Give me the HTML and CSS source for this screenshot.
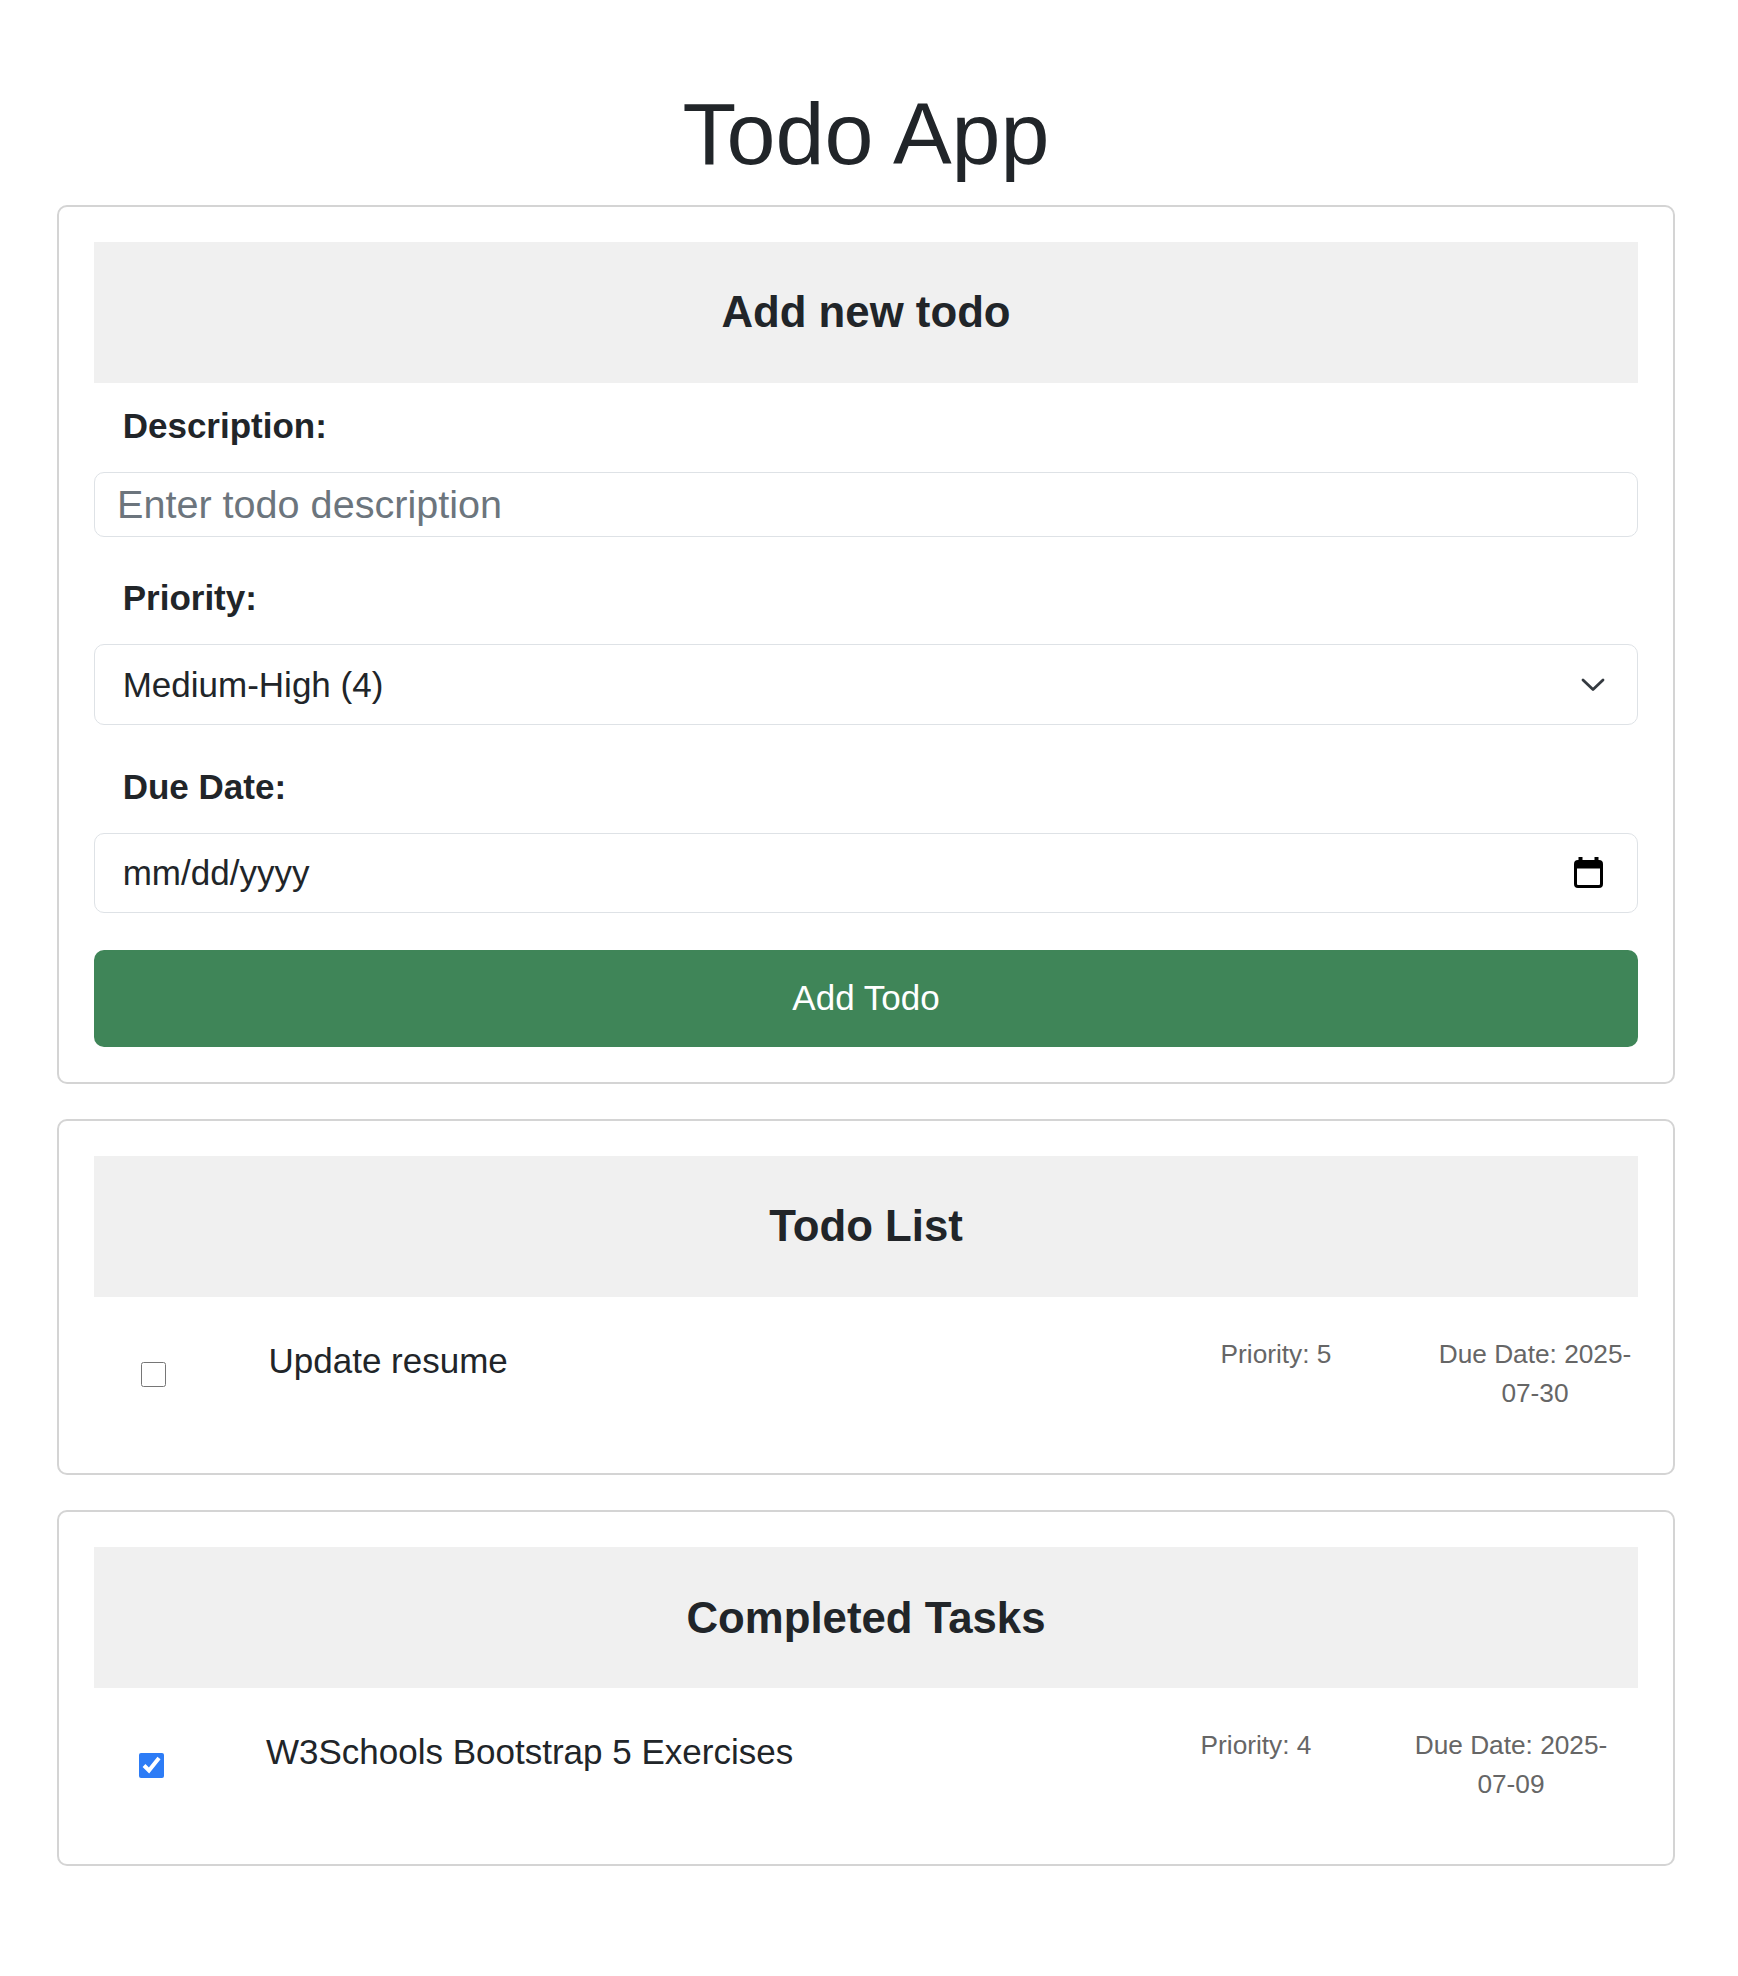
FILE: index.html
```html
<!DOCTYPE html>
<html lang="en">
<head>
<meta charset="utf-8">
<title>Todo App</title>
<link rel="stylesheet" href="styles.css">
</head>
<body>
<main class="app">
  <h1 class="app-title">Todo App</h1>

  <section class="card">
    <h2 class="card-header">Add new todo</h2>
    <form class="todo-form">
      <div class="form-group">
        <label class="form-label" for="desc">Description:</label>
        <input class="field field--text" id="desc" type="text" placeholder="Enter todo description">
      </div>
      <div class="form-group">
        <label class="form-label" for="prio">Priority:</label>
        <div class="field-wrap">
          <select class="field field--select" id="prio">
            <option>Medium-High (4)</option>
          </select>
          <svg class="select-chevron" width="24" height="14" viewBox="0 0 24 14" aria-hidden="true">
            <polyline points="2,2 12,11.5 22,2" fill="none" stroke="#343a40" stroke-width="2.8" stroke-linecap="round" stroke-linejoin="round"/>
          </svg>
        </div>
      </div>
      <div class="form-group">
        <label class="form-label" for="due">Due Date:</label>
        <div class="field-wrap">
          <input class="field field--date" id="due" type="text" placeholder="mm/dd/yyyy">
          <svg class="date-icon" width="29" height="31" viewBox="0 0 29 31" aria-hidden="true">
            <rect x="4.5" y="0" width="4" height="7" fill="#000"/>
            <rect x="20.5" y="0" width="4" height="7" fill="#000"/>
            <rect x="1.5" y="4.5" width="26" height="25" rx="2.5" fill="none" stroke="#000" stroke-width="3"/>
            <rect x="1.5" y="4.5" width="26" height="7" fill="#000"/>
          </svg>
        </div>
      </div>
      <button class="btn-add" type="button">Add Todo</button>
    </form>
  </section>

  <section class="card">
    <h2 class="card-header">Todo List</h2>
    <div class="todo-row todo-row--open">
      <input class="todo-check todo-check--open" type="checkbox">
      <div class="todo-text">Update resume</div>
      <div class="todo-meta">Priority: 5</div>
      <div class="todo-meta todo-due">Due Date: 2025-<wbr>07-30</div>
    </div>
  </section>

  <section class="card">
    <h2 class="card-header">Completed Tasks</h2>
    <div class="todo-row todo-row--done">
      <input class="todo-check todo-check--done" type="checkbox" checked>
      <div class="todo-text">W3Schools Bootstrap 5 Exercises</div>
      <div class="todo-meta">Priority: 4</div>
      <div class="todo-meta todo-due">Due Date: 2025-<wbr>07-09</div>
    </div>
  </section>
</main>
</body>
</html>
```

FILE: styles.css
```css
* {
  box-sizing: border-box;
}

body {
  margin: 0;
  background: #ffffff;
  color: #212529;
  font-family: "Liberation Sans", Arial, Helvetica, sans-serif;
}

.app {
  width: 1618px;
  margin-left: 57px;
  padding-top: 81px;
  padding-bottom: 80px;
}

.app-title {
  margin: 0 0 18px;
  font-size: 88px;
  font-weight: 400;
  line-height: 1.2;
  text-align: center;
}

.card {
  border: 2px solid #d4d4d4;
  border-radius: 10px;
  padding: 35px;
  margin-bottom: 35.5px;
  background: #fff;
}

.card-header {
  margin: 0;
  height: 141px;
  display: flex;
  align-items: center;
  justify-content: center;
  background: #f0f0f0;
  font-size: 43.75px;
  font-weight: 700;
  line-height: 1.2;
}

.todo-form {
  display: flex;
  flex-direction: column;
}

.form-group {
  margin-top: 35.5px;
}

.form-group:first-child {
  margin-top: 17px;
}

.form-label {
  display: block;
  margin-bottom: 19.5px;
  padding-left: 28.7px;
  font-size: 35px;
  font-weight: 700;
  line-height: 1.5;
}

.field-wrap {
  position: relative;
}

.field {
  display: block;
  width: 100%;
  margin: 0;
  border: 1px solid #dee2e6;
  border-radius: 10px;
  background: #fff;
  color: #212529;
  font-family: inherit;
  outline: none;
}

.field--text {
  height: 65px;
  padding: 0 22px;
  font-size: 39.6px;
}

.field--text::placeholder {
  color: #6c757d;
}

.field--select {
  height: 81px;
  padding: 0 27.7px;
  font-size: 35px;
  appearance: none;
  -webkit-appearance: none;
}

.select-chevron {
  position: absolute;
  right: 33px;
  top: 34px;
  pointer-events: none;
}

.field--date {
  height: 80px;
  padding: 0 27.7px;
  font-size: 35px;
}

.field--date::placeholder {
  color: #212529;
}

.date-icon {
  position: absolute;
  right: 35.5px;
  top: 24px;
  pointer-events: none;
}

.btn-add {
  display: block;
  width: 100%;
  height: 97px;
  margin-top: 37px;
  border: 0;
  border-radius: 10px;
  background: #3f8558;
  color: #ffffff;
  font-family: inherit;
  font-size: 35px;
}

.todo-row {
  display: grid;
  align-items: start;
  padding: 37.5px 0 24.5px;
}

.todo-row--open {
  grid-template-columns: 174.5px 1fr 312px 206px;
}

.todo-row--done {
  grid-template-columns: 172px 1fr 304px 230px;
}

.todo-check {
  width: 25px;
  height: 25px;
  margin: 27.5px 0 0 47px;
  accent-color: #2d7cf6;
}

.todo-check--done {
  margin-left: 45px;
}

.todo-text {
  font-size: 35px;
  line-height: 1.5;
}

.todo-meta {
  font-size: 26.25px;
  line-height: 1.5;
  color: #666666;
  text-align: center;
}

.todo-row--done .todo-due {
  padding-right: 24px;
}
```
